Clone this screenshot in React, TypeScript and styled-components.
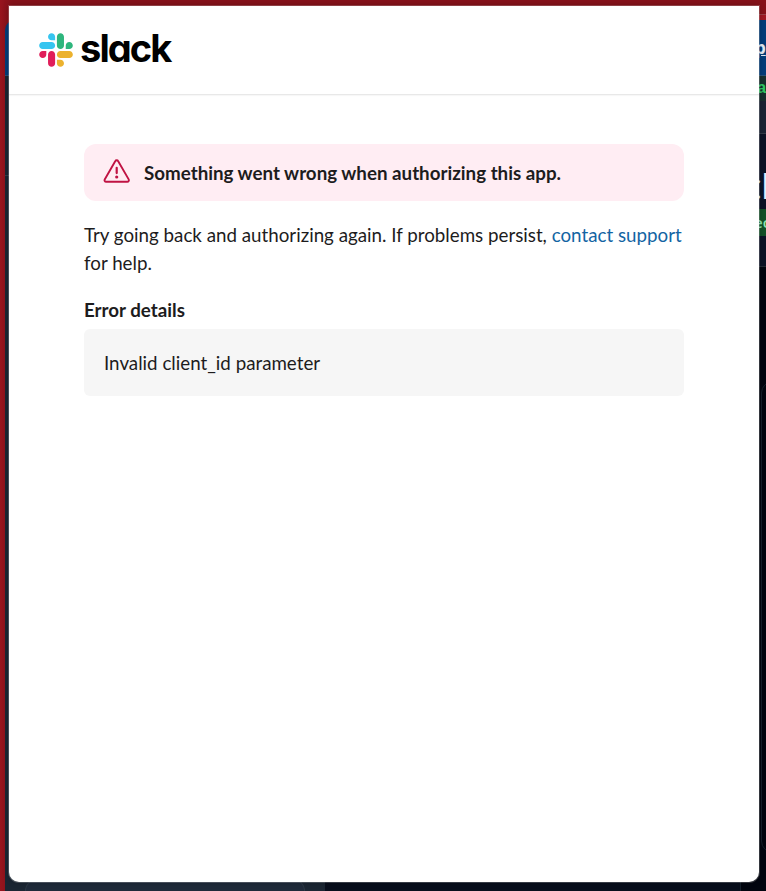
import React from "react";
import styled, { createGlobalStyle } from "styled-components";

const GlobalStyle = createGlobalStyle`
  * { box-sizing: border-box; }
  body { margin: 0; overflow: hidden; background: #01050f; }
`;

const Screen = styled.div`
  position: relative;
  width: 766px;
  height: 891px;
  overflow: hidden;
  font-family: Lato, "Liberation Sans", sans-serif;
`;

const Backdrop = styled.div`
  display: flex;
  flex-direction: column;
  height: 100%;
  padding-left: 5px;
  background: linear-gradient(90deg, #98151e 0, #8e131c 5px, #86121a 12px, #86121a 100%);
`;

const TitleBar = styled.div`
  flex: 0 0 14px;
`;

const TabBar = styled.div`
  flex: 0 0 6px;
  margin-left: 600px;
  border-top: 1px solid #9b4148;
  background: #a01823;
`;

const AddressBar = styled.div`
  flex: 0 0 56px;
  padding: 18px 0 0 750px;
  border-top-left-radius: 10px;
  border-bottom: 1px solid #275379;
  background: #043d7a;
  color: #e3ecf6;
  font: 700 17px/20px "Open Sans", sans-serif;
  text-decoration: underline;
  white-space: nowrap;
`;

const Workspace = styled.div`
  flex: 1;
  display: grid;
  grid-template-columns: 320px 1fr;
  min-height: 0;
`;

const Sidebar = styled.div`
  display: flex;
  flex-direction: column;
  justify-content: space-between;
  background: #1b2633;
`;

const SidebarRule = styled.div`
  height: 100px;
  border-bottom: 1px solid #35404c;
`;

const SidebarCard = styled.div`
  height: 12px;
  margin: 0 20px;
  border: 1px solid #2b3744;
  border-bottom: 0;
  border-radius: 12px 12px 0 0;
  background: #1f2a3a;
`;

const Main = styled.div`
  display: flex;
  flex-direction: column;
  min-width: 0;
  overflow: hidden;
  background: #01050f;
  white-space: nowrap;
`;

const StatusRow = styled.div`
  flex: 0 0 25px;
  padding: 1px 0 0 432px;
  background: #18302f;
  color: #32c864;
  font: 700 16px/24px "Liberation Mono", monospace;
`;

const ToolRow = styled.div`
  flex: 0 0 33px;
  border-bottom: 1px solid #343c49;
  background: #1b2435;
`;

const Heading = styled.div`
  flex: 0 0 75px;
  padding: 32px 0 0 420px;
  background: #0c1326;
  color: #e3effb;
  font: 400 34px/40px "Open Sans", sans-serif;
`;

const Tag = styled.div`
  flex: 0 0 27px;
  padding-left: 429px;
  background: #145028;
  color: #92e6b2;
  font: 600 15px/26px "Open Sans", sans-serif;
`;

const Gap = styled.div`
  flex: 0 0 31px;
  border-bottom: 1px solid #252c36;
  background: #0c1326;
`;

const SideCard = styled.div`
  flex: 0 0 472px;
  width: 60px;
  margin: 114px 0 0 436px;
  border: 1px solid #15202b;
  border-radius: 12px;
`;

const Footer = styled.div`
  flex: 1;
  width: 416px;
  margin-top: 16px;
  border-right: 1px solid #15202b;
  background: #080e1c;
`;

const Dialog = styled.main`
  position: absolute;
  inset: 6px 7px 9px 9px;
  display: flex;
  flex-direction: column;
  border-radius: 0 0 10px 10px;
  background: #fff;
  box-shadow: 0 0 0 1px rgba(255, 255, 255, 0.2), 0 0 6px rgba(0, 0, 0, 0.3);
  color: #1d1c1d;
`;

const Header = styled.header`
  display: flex;
  align-items: center;
  height: 89px;
  padding-left: 30px;
  border-bottom: 1px solid #e8e8e8;
  box-shadow: 0 1px 1px rgba(0, 0, 0, 0.03);
`;

const Mark = styled.svg`
  width: 34px;
  height: 34px;
  flex: none;
  margin-left: -0.5px;
`;

const Wordmark = styled.span`
  margin: -4px 0 0 7.5px;
  color: #000;
  font: 750 38px/44px Inter, sans-serif;
  font-feature-settings: "cv11" 1;
  letter-spacing: -1.9px;
`;

const Content = styled.section`
  width: 600px;
  margin: 49px 0 0 75px;
  font-size: 18.75px;
  line-height: 28px;
`;

const Alert = styled.div`
  display: flex;
  align-items: center;
  height: 57px;
  padding-left: 19px;
  border-radius: 12px;
  background: #ffedf3;
  font-weight: 700;
`;

const AlertIcon = styled.svg`
  width: 28px;
  height: 26px;
  margin: -3px 13px 0 0;
`;

const Message = styled.p`
  margin: 20px 0 0;
`;

const SupportLink = styled.a`
  color: #1264a3;
  text-decoration: none;
`;

const DetailsTitle = styled.h2`
  margin: 19px 0 5px;
  font-size: 18.75px;
  line-height: 28px;
  font-weight: 700;
`;

const Details = styled.div`
  height: 67px;
  padding: 20px;
  border-radius: 6px;
  background: #f6f6f6;
`;

const SlackMark = () => (
  <Mark viewBox="0 0 127 127">
    <path fill="#E01E5A" d="M27.2 80c0 7.3-5.9 13.2-13.2 13.2S.8 87.3.8 80s5.9-13.2 13.2-13.2h13.2V80zm6.6 0c0-7.3 5.9-13.2 13.2-13.2S60.2 72.7 60.2 80v33c0 7.3-5.9 13.2-13.2 13.2s-13.2-5.9-13.2-13.2V80z" />
    <path fill="#36C5F0" d="M47 27c-7.3 0-13.2-5.9-13.2-13.2S39.7.6 47 .6s13.2 5.9 13.2 13.2V27H47zm0 6.7c7.3 0 13.2 5.9 13.2 13.2S54.3 60.1 47 60.1H13.9C6.6 60.1.7 54.2.7 46.9s5.9-13.2 13.2-13.2H47z" />
    <path fill="#2EB67D" d="M99.9 46.9c0-7.3 5.9-13.2 13.2-13.2s13.2 5.9 13.2 13.2-5.9 13.2-13.2 13.2H99.9V46.9zm-6.6 0c0 7.3-5.9 13.2-13.2 13.2s-13.2-5.9-13.2-13.2V13.8C66.9 6.5 72.8.6 80.1.6s13.2 5.9 13.2 13.2v33.1z" />
    <path fill="#ECB22E" d="M80.1 99.8c7.3 0 13.2 5.9 13.2 13.2s-5.9 13.2-13.2 13.2-13.2-5.9-13.2-13.2V99.8h13.2zm0-6.6c-7.3 0-13.2-5.9-13.2-13.2s5.9-13.2 13.2-13.2h33.1c7.3 0 13.2 5.9 13.2 13.2s-5.9 13.2-13.2 13.2H80.1z" />
  </Mark>
);

const WarningIcon = () => (
  <AlertIcon viewBox="0 0 28 26" fill="none" stroke="#c01343" strokeWidth="1.9">
    <path strokeLinejoin="round" d="M12.2 3.2a1.7 1.7 0 0 1 3 0l10.5 18.2a1.6 1.6 0 0 1-1.4 2.4H3.1a1.6 1.6 0 0 1-1.4-2.4z" />
    <path strokeLinecap="round" strokeWidth="2.2" d="M13.7 9.8v5.3" />
    <circle cx="13.7" cy="19" r="1.6" fill="#c01343" stroke="none" />
  </AlertIcon>
);

export default function App() {
  return (
    <Screen>
      <GlobalStyle />
      <Backdrop aria-hidden="true">
        <TitleBar />
        <TabBar />
        <AddressBar>p</AddressBar>
        <Workspace>
          <Sidebar>
            <SidebarRule />
            <SidebarCard />
          </Sidebar>
          <Main>
            <StatusRow>a</StatusRow>
            <ToolRow />
            <Heading>cl</Heading>
            <Tag>ec</Tag>
            <Gap />
            <SideCard />
            <Footer />
          </Main>
        </Workspace>
      </Backdrop>
      <Dialog>
        <Header>
          <SlackMark />
          <Wordmark>slack</Wordmark>
        </Header>
        <Content>
          <Alert>
            <WarningIcon />
            Something went wrong when authorizing this app.
          </Alert>
          <Message>
            Try going back and authorizing again. If problems persist,{" "}
            <SupportLink href="#">contact support</SupportLink> for help.
          </Message>
          <DetailsTitle>Error details</DetailsTitle>
          <Details>Invalid client_id parameter</Details>
        </Content>
      </Dialog>
    </Screen>
  );
}
